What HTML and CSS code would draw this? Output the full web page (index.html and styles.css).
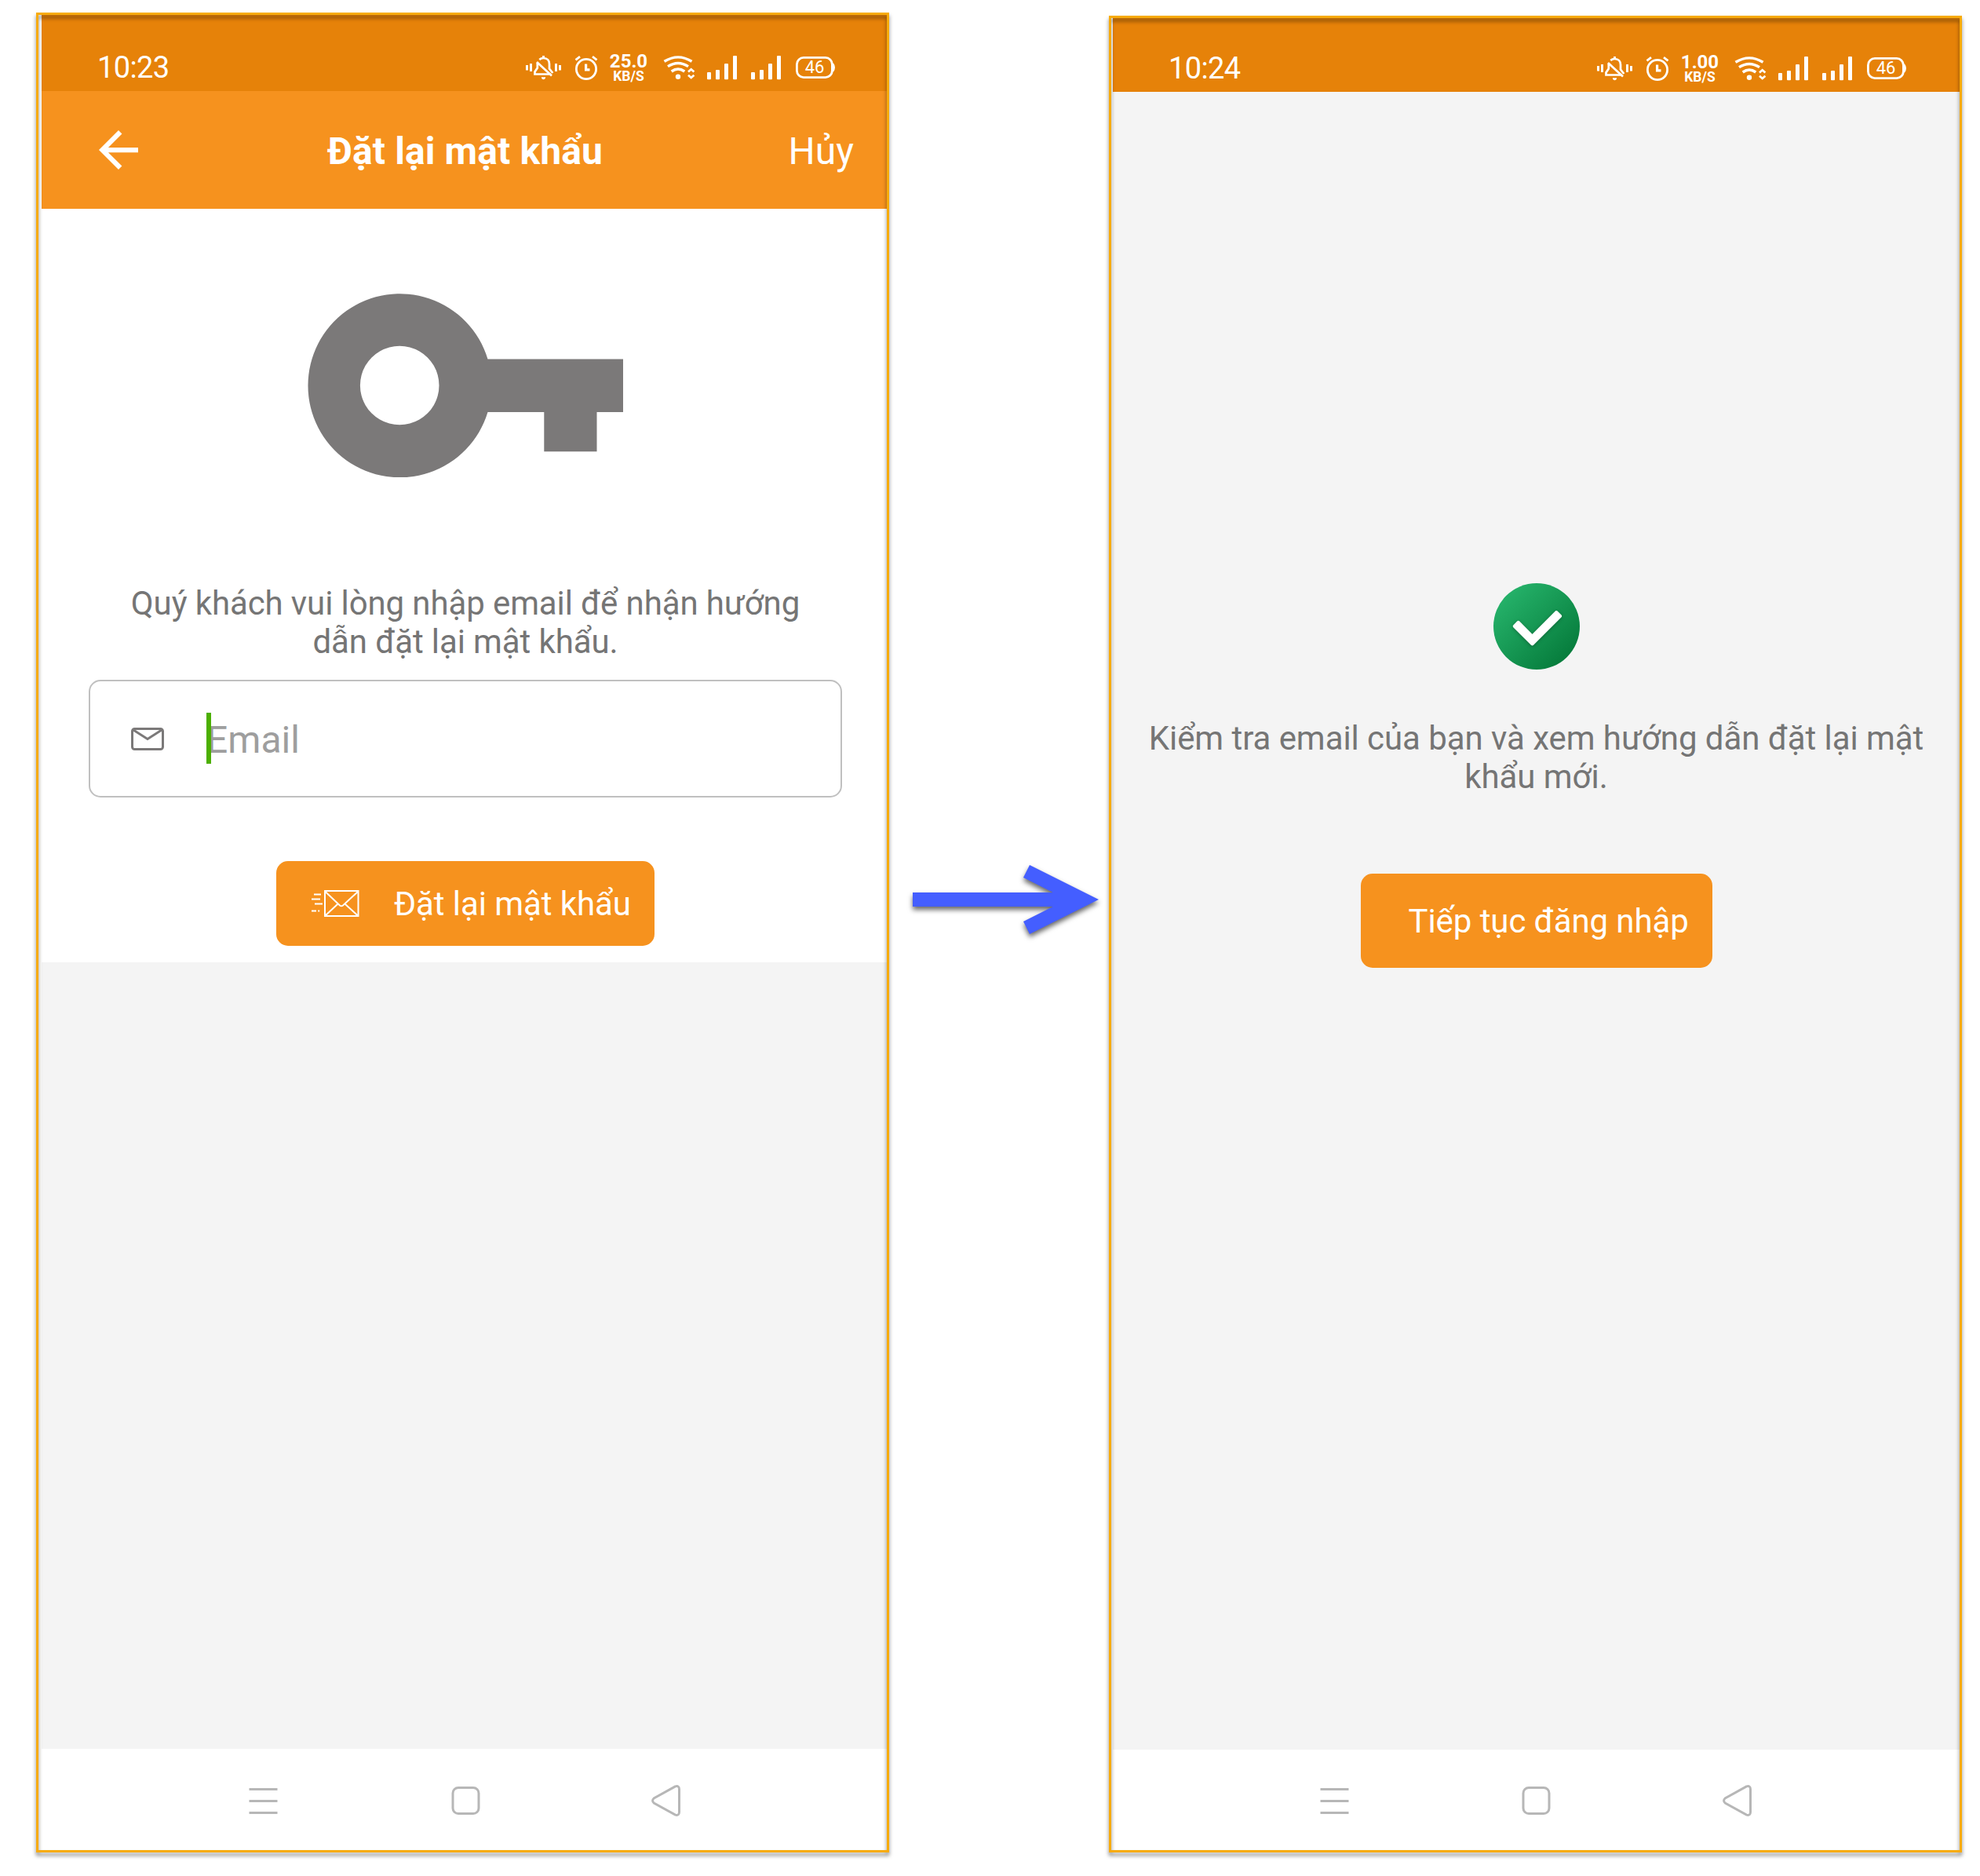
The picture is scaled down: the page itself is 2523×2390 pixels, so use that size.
FILE: index.html
```html
<!DOCTYPE html>
<html lang="vi">
<head>
<meta charset="utf-8">
<title>Đặt lại mật khẩu</title>
<link rel="stylesheet" href="styles.css">
</head>
<body>
<svg class="defs" width="0" height="0" aria-hidden="true">
  <symbol id="bell" viewBox="0 0 45 31">
    <g fill="currentColor"><rect x="0" y="12" width="3" height="6.5"/><rect x="5" y="10" width="3" height="10"/><rect x="37" y="10" width="3" height="10"/><rect x="42" y="12" width="3" height="6.5"/><rect x="21" y="0" width="3" height="3"/><path d="M19.8 27.2h5.400q-.4 3-2.700 3t-2.700-3z"/></g>
    <g fill="none" stroke="currentColor" stroke-width="2.700"><path d="M14.800 9V15.500L11.500 20.500V23.500H32"/><path d="M14 8L33 25.500"/><path d="M17.300 4.900Q19.300 3 22.500 3C27.500 3 30 6.500 30 10.500V16.500L34.300 22"/></g>
  </symbol>
  <symbol id="alarm" viewBox="0 0 30 31">
    <g fill="none" stroke="currentColor" stroke-width="2.800"><circle cx="15" cy="17" r="12.600"/><path d="M1.500 5.300L7 1.200M23 1.200L28.500 5.300"/><path d="M14.600 10.500V17.800H19.500" stroke-width="3.200"/></g>
  </symbol>
  <symbol id="wifi" viewBox="0 0 41 31">
    <circle cx="19" cy="26.700" r="3.200" fill="currentColor"/>
    <g fill="none" stroke="currentColor" stroke-width="3.400"><path d="M1.500 7.300Q19-3.500 36.500 7.300"/><path d="M6 13.600Q19 5.200 32 13.600"/><path d="M10.700 20Q19 14 27.300 20"/></g>
    <g fill="none" stroke="currentColor" stroke-width="2.700"><path d="M32 20.500L35.700 17.300L39.400 20.500M32 24.700L35.700 28L39.400 24.700"/></g>
  </symbol>
  <symbol id="signal" viewBox="0 0 38 31">
    <g fill="currentColor"><rect x="0" y="21" width="5" height="9.300" rx="1"/><rect x="11" y="18" width="5" height="12.300" rx="1"/><rect x="22" y="10" width="5" height="20.300" rx="1"/><rect x="33" y="0" width="5" height="30.300" rx="1"/></g>
  </symbol>
  <symbol id="battery" viewBox="0 0 50 28">
    <rect x="1.400" y="1.400" width="45" height="25.200" rx="8.500" fill="none" stroke="currentColor" stroke-width="2.800"/>
    <path d="M46.500 8.500h1.500q2 2.500 2 5.500t-2 5.500h-1.500z" fill="currentColor"/>
  </symbol>
  <symbol id="menu" viewBox="0 0 36 40"><path d="M0 5.500H36M0 20.500H36M0 35.500H36" fill="none" stroke="currentColor" stroke-width="3"/></symbol>
  <symbol id="home" viewBox="0 0 36 40"><rect x="1.500" y="3.500" width="33" height="33" rx="7" fill="none" stroke="currentColor" stroke-width="3"/></symbol>
  <symbol id="back" viewBox="0 0 37 40"><path d="M30.500 1.900L3.200 17Q0 20 3.200 23L30.500 38.100Q35.500 39.500 35.500 34.500V5.500Q35.500.5 30.500 1.900Z" fill="none" stroke="currentColor" stroke-width="3"/></symbol>
</svg>

<main class="board">
  <section class="phone phone-form">
    <header class="status">
      <span class="time">10:23</span>
      <svg class="i-bell"><use href="#bell"/></svg>
      <svg class="i-alarm"><use href="#alarm"/></svg>
      <span class="speed"><b>25.0</b><small>KB/S</small></span>
      <svg class="i-wifi"><use href="#wifi"/></svg>
      <svg class="i-signal"><use href="#signal"/></svg>
      <svg class="i-signal"><use href="#signal"/></svg>
      <span class="battery"><svg><use href="#battery"/></svg><span>46</span></span>
    </header>
    <nav class="appbar">
      <svg class="arrow-back" viewBox="4 4 16 16"><path fill="#fff" d="M20 11H7.830l5.590-5.590L12 4l-8 8 8 8 1.410-1.410L7.830 13H20v-2z"/></svg>
      <h1>Đặt lại mật khẩu</h1>
      <span class="cancel">Hủy</span>
    </nav>
    <div class="form">
      <svg class="key" viewBox="0 0 402 234">
        <path fill="#7b7979" fill-rule="evenodd" d="M229.500 83.500H402V151H368.500V201.200H301.300V151H229.500A117 117 0 1 1 229.500 83.500ZM117.200 66.700a50.300 50.300 0 1 0 .01 0Z"/>
      </svg>
      <p class="note">Quý khách vui lòng nhập email để nhận hướng<br>dẫn đặt lại mật khẩu.</p>
      <div class="field">
        <svg class="mail" viewBox="0 0 42 29"><g fill="none" stroke="#7b7979" stroke-width="3"><rect x="1.500" y="1.500" width="39" height="26" rx="3"/><path d="M3 3L21 14.500L39 3"/></g></svg>
        <span class="placeholder">Email<i class="caret"></i></span>
      </div>
      <div class="button button-reset">
        <svg viewBox="0 0 61 34"><g fill="none" stroke="#fff" stroke-width="2"><rect x="17" y="1" width="42.500" height="32"/><path d="M17 1.500L36 19.500Q38 21 40 19.500L59.500 1.500M17 33L33 18M59.500 33L43 18"/><path d="M3 5.500H12M0 11.500H11M4 17.500H14M0 26.500H6M8.200 26.500H10.200"/></g></svg>
        <span>Đặt lại mật khẩu</span>
      </div>
    </div>
    <div class="blank"></div>
    <footer class="navbar">
      <svg><use href="#menu"/></svg><svg><use href="#home"/></svg><svg><use href="#back"/></svg>
    </footer>
    <div class="frame"></div>
  </section>

  <div class="step">
    <svg viewBox="0 0 237 88"><path fill="#445eff" d="M0 35H178.700L141 16L149 0L237 44L149 88L141 72L178.700 53H0Z"/></svg>
  </div>

  <section class="phone phone-done">
    <header class="status">
      <span class="time">10:24</span>
      <svg class="i-bell"><use href="#bell"/></svg>
      <svg class="i-alarm"><use href="#alarm"/></svg>
      <span class="speed"><b>1.00</b><small>KB/S</small></span>
      <svg class="i-wifi"><use href="#wifi"/></svg>
      <svg class="i-signal"><use href="#signal"/></svg>
      <svg class="i-signal"><use href="#signal"/></svg>
      <span class="battery"><svg><use href="#battery"/></svg><span>46</span></span>
    </header>
    <div class="done">
      <svg class="check" viewBox="0 0 110 110">
        <defs><linearGradient id="green" x1="0.150" y1="0.150" x2="0.850" y2="0.850"><stop offset="0" stop-color="#24b068"/><stop offset="1" stop-color="#077d3d"/></linearGradient></defs>
        <circle cx="55" cy="55" r="55" fill="url(#green)"/>
        <path class="tick" d="M49.500 68L31.700 50.200L27.100 54.800L49.500 77.200L84.800 41.900L80.200 37.300Z" fill="#fff" stroke="#fff" stroke-width="4.500" stroke-linejoin="round"/>
      </svg>
      <p class="note">Kiểm tra email của bạn và xem hướng dẫn đặt lại mật<br>khẩu mới.</p>
      <div class="button button-login"><span>Tiếp tục đăng nhập</span></div>
    </div>
    <footer class="navbar">
      <svg><use href="#menu"/></svg><svg><use href="#home"/></svg><svg><use href="#back"/></svg>
    </footer>
    <div class="frame"></div>
  </section>
</main>
</body>
</html>
```
FILE: styles.css
```css
* { box-sizing: border-box; }
body { margin: 0; background: #fff; font-family: Roboto, sans-serif; }
svg { display: block; flex: none; }
.defs { position: absolute; }
h1, p { margin: 0; }

.board { display: flex; align-items: flex-start; width: 2523px; height: 2390px; padding: 16px 0 0 46px; overflow: hidden; }

.phone { position: relative; flex: none; display: flex; flex-direction: column; width: 1087px; }
.phone-form { height: 2344px; padding: 3px 3px 3px 7px; }
.phone-done { height: 2340px; margin-top: 4px; padding: 3px 3px 3px 5px; }
.frame { position: absolute; inset: 0; border: 3px solid #f7ab0a; filter: drop-shadow(0 4px 2.500px rgba(0, 0, 0, .5)); pointer-events: none; }

/* Android status bar */
.status { display: flex; align-items: flex-start; height: 97px; padding: 52px 66px 0 71px; background: #e68209; color: #fff; }
.phone-done .status { height: 94px; padding-top: 49px; padding-right: 68px; }
.time { flex: 1; margin-top: -7px; font-size: 38px; line-height: 44px; letter-spacing: -.6px; }
.i-bell { width: 45px; height: 31px; margin-right: 17px; }
.i-alarm { width: 30px; height: 31px; margin-right: 14px; }
.i-wifi { width: 41px; height: 31px; margin-right: 15px; }
.i-signal { width: 38px; height: 31px; margin-right: 18px; }
.i-signal + .i-signal { margin-right: 19px; }
.speed { display: flex; flex-direction: column; align-items: center; width: 50px; margin: -6px 19px 0 0; }
.speed b { font-size: 24px; line-height: 26px; }
.speed small { font-size: 17.500px; line-height: 12px; font-weight: 700; }
.battery { display: grid; width: 50px; height: 28px; margin-top: 1px; }
.battery > * { grid-area: 1 / 1; }
.battery svg { width: 50px; height: 28px; }
.battery span { padding-right: 2px; font-size: 22px; line-height: 28px; font-weight: 400; text-align: center; }

.appbar { display: grid; grid-template-columns: 1fr auto 1fr; align-items: center; height: 150px; padding: 0 43px 0 73px; background: #f6921e; color: #fff; }
.arrow-back { width: 50px; height: 50px; }
.appbar h1 { margin: 4px 28px 0 0; font-size: 48px; line-height: 56px; font-weight: 700; letter-spacing: .1px; white-space: nowrap; }
.cancel { margin: 4px -1px 0 0; font-size: 48px; line-height: 56px; text-align: right; }

.form { display: flex; flex-direction: column; align-items: center; height: 960px; padding-top: 108px; background: #fff; }
.key { width: 402px; height: 234px; margin-left: 3px; }
.note { color: #757575; font-size: 42px; line-height: 49px; letter-spacing: -.06px; text-align: center; white-space: nowrap; }
.form .note { margin-top: 136px; margin-left: 3px; letter-spacing: -.11px; }
.field { display: flex; align-items: center; width: 960px; height: 150px; margin: 24px 0 0 3px; padding-left: 52px; border: 2px solid #c0c0c0; border-radius: 15px; }
.mail { width: 42px; height: 29px; }
.placeholder { position: relative; margin: 3px 0 0 54px; color: #9e9e9e; font-size: 48px; line-height: 56px; }
.caret { position: absolute; left: 0; top: -7px; width: 6px; height: 65px; background: #4caf00; }

.button { display: flex; align-items: center; background: #f6921e; border-radius: 15px; color: #fff; font-size: 42px; line-height: 49px; letter-spacing: -.08px; white-space: nowrap; }
.button-reset { width: 482px; height: 108px; margin: 81px 0 0 3px; padding-left: 45px; }
.button-reset svg { width: 61px; height: 34px; margin-right: 44px; }
.blank { flex: 1; background: #f4f4f4; }

.navbar { display: flex; align-items: center; justify-content: space-between; height: 129px; padding: 2px 263px 0 264px; background: #fff; color: #b7b7b7; }
.navbar svg { width: 37px; height: 40px; }
.phone-form .navbar svg:nth-child(2) { margin-left: 2px; }
.phone-done .navbar { height: 128px; padding-right: 265px; }

.step { flex: none; width: 280px; padding: 1086px 0 0 30px; }
.step svg { width: 237px; height: 88px; overflow: visible; filter: drop-shadow(0 4px 3px rgba(0, 0, 0, .6)); }

.done { flex: 1; display: flex; flex-direction: column; align-items: center; padding-top: 626px; background: #f4f4f4; }
.check { width: 110px; height: 110px; }
.tick { filter: drop-shadow(0 1px 2px rgba(0, 0, 0, .3)); }
.done .note { margin-top: 63px; }
.button-login { width: 448px; height: 120px; margin-top: 99px; padding-left: 61px; }
```
